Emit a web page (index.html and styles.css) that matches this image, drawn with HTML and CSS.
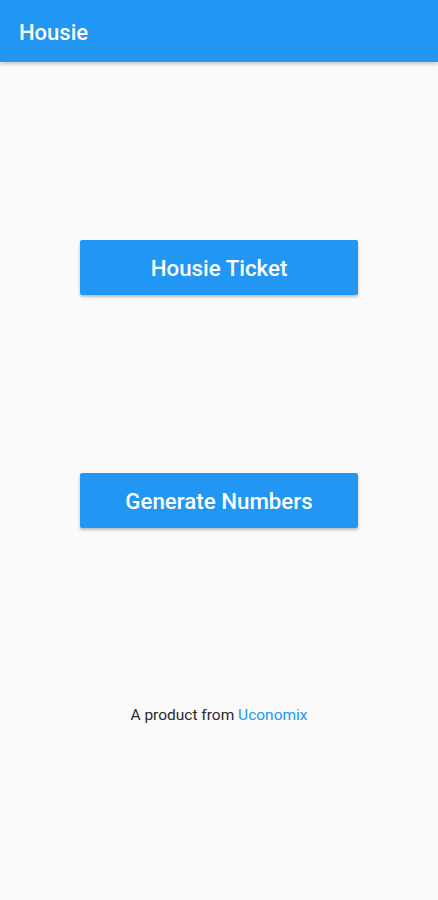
FILE: index.html
```html
<!DOCTYPE html>
<html lang="en">

<head>
    <meta charset="UTF-8">
    <meta name="viewport" content="width=device-width, initial-scale=1.0">
    <title>Housie</title>
    <link rel="stylesheet" href="styles.css">
</head>

<body>
    <header class="app-bar">
        <h1 class="app-title">Housie</h1>
    </header>

    <main class="home">
        <div class="home-actions">
            <a href="#" class="btn">Housie Ticket</a>
            <a href="#" class="btn">Generate Numbers</a>
        </div>
        <p class="credit">A product from <a href="#" class="credit-link">Uconomix</a></p>
    </main>
</body>

</html>
```

FILE: styles.css
```css
* {
    margin: 0;
    padding: 0;
    box-sizing: border-box;
}

body {
    font-family: Roboto, "Noto Sans", sans-serif;
    background-color: #fafafa;
    width: 438px;
    height: 900px;
}

.app-bar {
    height: 62px;
    background-color: #2196f3;
    display: flex;
    align-items: center;
    padding: 0 19px;
    box-shadow: 0 2px 4px rgba(0, 0, 0, 0.22);
}

.app-title {
    color: white;
    font-size: 22px;
    font-weight: 500;
    margin-top: 2px;
}

.home {
    display: flex;
    flex-direction: column;
    align-items: center;
    padding-top: 178px;
}

.home-actions {
    display: flex;
    flex-direction: column;
    gap: 178px;
}

.btn {
    display: flex;
    justify-content: center;
    align-items: center;
    width: 278px;
    height: 55px;
    background-color: #2196f3;
    color: white;
    font-size: 22.3px;
    font-weight: 500;
    text-decoration: none;
    border-radius: 2px;
    box-shadow: 0 2px 3px rgba(0, 0, 0, 0.25);
}

.credit {
    margin-top: 176px;
    font-size: 15.5px;
    line-height: 22px;
    color: #2a2a2a;
}

.credit-link {
    color: #2196f3;
    text-decoration: none;
}
```
